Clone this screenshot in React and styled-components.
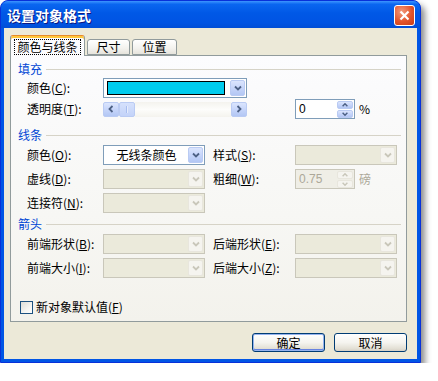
import styled, { createGlobalStyle } from "styled-components";

const GlobalStyle = createGlobalStyle`
  html, body {
    margin: 0;
    background: #fff;
  }
  body {
    font-family: "Noto Sans CJK SC", "Noto Sans", sans-serif;
    font-size: 12px;
    color: #000;
  }
`;

function Chevron({ dir = "down", color = "#4d6185" }) {
  const paths = {
    down: "M1 1.5 L4 4.5 L7 1.5",
    up: "M1 4.5 L4 1.5 L7 4.5",
    left: "M4.5 1 L1.5 4 L4.5 7",
    right: "M1.5 1 L4.5 4 L1.5 7",
  };
  const vertical = dir === "down" || dir === "up";
  return (
    <svg width={vertical ? 8 : 6} height={vertical ? 6 : 8} viewBox={vertical ? "0 0 8 6" : "0 0 6 8"}>
      <path d={paths[dir]} fill="none" stroke={color} strokeWidth="1.8" />
    </svg>
  );
}

function Combo({ disabled, width = 102, children, centered }) {
  return (
    <ComboBox $disabled={disabled} $w={width}>
      <ComboValue $centered={centered}>{children}</ComboValue>
      <DropButton $disabled={disabled}>
        <Chevron color={disabled ? "#c9c7ba" : "#4d6185"} />
      </DropButton>
    </ComboBox>
  );
}

function SpinBox({ value, disabled }) {
  return (
    <Spin $disabled={disabled}>
      <SpinText $disabled={disabled}>{value}</SpinText>
      <SpinButtons>
        <SpinHalf $disabled={disabled}>
          <Chevron dir="up" color={disabled ? "#c9c7ba" : "#4d6185"} />
        </SpinHalf>
        <SpinHalf $disabled={disabled}>
          <Chevron dir="down" color={disabled ? "#c9c7ba" : "#4d6185"} />
        </SpinHalf>
      </SpinButtons>
    </Spin>
  );
}

function Section({ title, top }) {
  return (
    <SectionHead $top={top}>
      <HeadText>{title}</HeadText>
      <HeadLine />
    </SectionHead>
  );
}

export default function App() {
  return (
    <>
      <GlobalStyle />
      <Window>
        <TitleBar>
          <Title>设置对象格式</Title>
          <CloseButton>
            <svg width="11" height="11" viewBox="0 0 11 11">
              <path d="M1.5 1.5 L9.5 9.5 M9.5 1.5 L1.5 9.5" stroke="#fff" strokeWidth="2.2" />
            </svg>
          </CloseButton>
        </TitleBar>
        <Body>
          <TabStrip>
            <Tab $active $w={75}>
              <FocusText>颜色与线条</FocusText>
            </Tab>
            <Tab $w={43}>尺寸</Tab>
            <Tab $w={45}>位置</Tab>
          </TabStrip>
          <Panel>
            <Section title="填充" top={0} />
            <FieldGrid $rowH={20} $gap={1}>
              <Label $col={1}>颜色(<u>C</u>):</Label>
              <Wide>
                <ComboBox $w={144}>
                  <Swatch />
                  <DropButton>
                    <Chevron />
                  </DropButton>
                </ComboBox>
              </Wide>
              <Label $col={1}>透明度(<u>T</u>):</Label>
              <Wide>
                <Slider>
                  <ArrowButton>
                    <Chevron dir="left" />
                  </ArrowButton>
                  <Thumb />
                  <Track />
                  <ArrowButton>
                    <Chevron dir="right" />
                  </ArrowButton>
                </Slider>
              </Wide>
              <SpinCell>
                <SpinBox value="0" />
                <Unit>%</Unit>
              </SpinCell>
            </FieldGrid>

            <Section title="线条" top={9} />
            <FieldGrid $rowH={21} $gap={3}>
              <Label>颜色(<u>O</u>):</Label>
              <Combo centered>无线条颜色</Combo>
              <Label>样式(<u>S</u>):</Label>
              <Combo disabled />
              <Label>虚线(<u>D</u>):</Label>
              <Combo disabled />
              <Label>粗细(<u>W</u>):</Label>
              <SpinCell>
                <SpinBox value="0.75" disabled />
                <Unit $disabled>磅</Unit>
              </SpinCell>
              <Label>连接符(<u>N</u>):</Label>
              <Combo disabled />
            </FieldGrid>

            <Section title="箭头" top={4} />
            <FieldGrid $rowH={21} $gap={3}>
              <Label>前端形状(<u>B</u>):</Label>
              <Combo disabled />
              <Label>后端形状(<u>E</u>):</Label>
              <Combo disabled />
              <Label>前端大小(<u>I</u>):</Label>
              <Combo disabled />
              <Label>后端大小(<u>Z</u>):</Label>
              <Combo disabled />
            </FieldGrid>

            <CheckRow>
              <CheckBox />
              <span>新对象默认值(<u>F</u>)</span>
            </CheckRow>
          </Panel>
          <Footer>
            <Button $default>确定</Button>
            <Button>取消</Button>
          </Footer>
        </Body>
      </Window>
    </>
  );
}

const Window = styled.div`
  width: 421px;
  height: 363px;
  box-sizing: border-box;
  display: flex;
  flex-direction: column;
  border: 1px solid #0831d9;
  border-radius: 8px 8px 0 0;
  background: #0055e5;
  box-shadow: 4px 5px 6px rgba(0, 0, 0, 0.45);
  overflow: hidden;
`;

const TitleBar = styled.div`
  height: 27px;
  flex: none;
  display: flex;
  align-items: center;
  justify-content: space-between;
  padding: 0 5px 0 6px;
  background: linear-gradient(
    180deg,
    #3d95ff 0%,
    #0a66f0 12%,
    #0058e6 45%,
    #0054e3 80%,
    #004ed6 100%
  );
`;

const Title = styled.div`
  color: #fff;
  font-size: 14px;
  font-weight: bold;
  line-height: 1;
  text-shadow: 1px 1px 0 #0a1883;
`;

const CloseButton = styled.div`
  width: 19px;
  height: 19px;
  margin-top: 1px;
  display: flex;
  align-items: center;
  justify-content: center;
  border: 1px solid #fff;
  border-radius: 3px;
  background: radial-gradient(circle at 35% 30%, #f39a7c 0%, #e2542c 55%, #c53c16 100%);
`;

const Body = styled.div`
  flex: 1;
  margin: 0 3px 3px 3px;
  background: #ece9d8;
  padding: 7px 10px 0 6px;
  display: flex;
  flex-direction: column;
`;

const TabStrip = styled.div`
  height: 20px;
  display: flex;
  align-items: flex-end;
  gap: 2px;
  position: relative;
  z-index: 1;
`;

const Tab = styled.div`
  box-sizing: border-box;
  width: ${(p) => p.$w}px;
  height: ${(p) => (p.$active ? 21 : 16)}px;
  margin-bottom: ${(p) => (p.$active ? -1 : 0)}px;
  display: flex;
  align-items: center;
  justify-content: center;
  border: 1px solid #919b9c;
  border-bottom: ${(p) => (p.$active ? "none" : "1px solid #919b9c")};
  border-top-color: ${(p) => (p.$active ? "#e68b2c" : "#919b9c")};
  border-radius: 3px 3px 0 0;
  background: ${(p) =>
    p.$active ? "#fcfcfe" : "linear-gradient(180deg, #ffffff 0%, #f3f2ee 60%, #e6e4dc 100%)"};
  box-shadow: ${(p) => (p.$active ? "inset 0 2px 0 #ffc83c" : "none")};
  line-height: 1;
  padding-top: ${(p) => (p.$active ? 2 : 0)}px;
`;

const FocusText = styled.span`
  outline: 1px dotted #000;
  outline-offset: 1px;
  padding: 0 1px;
`;

const Panel = styled.div`
  height: 267px;
  box-sizing: border-box;
  border: 1px solid #919b9c;
  background: linear-gradient(180deg, #fcfcfe 0%, #f7f7f4 60%, #f3f2ec 100%);
  padding: 6px 5px 0 7px;
  display: flex;
  flex-direction: column;
`;

const SectionHead = styled.div`
  height: 14px;
  margin-top: ${(p) => p.$top}px;
  display: flex;
  align-items: center;
  gap: 4px;
`;

const HeadText = styled.span`
  color: #0046d5;
  line-height: 1;
`;

const HeadLine = styled.div`
  flex: 1;
  height: 1px;
  background: #d6d3c7;
`;

const FieldGrid = styled.div`
  margin: 2px 0 0 9px;
  display: grid;
  grid-template-columns: 76px 110px 82px 102px;
  grid-auto-rows: ${(p) => p.$rowH}px;
  row-gap: ${(p) => p.$gap}px;
  align-items: center;
`;

const Label = styled.div`
  line-height: 1;
  white-space: nowrap;
  grid-column-start: ${(p) => p.$col || "auto"};
`;

const Wide = styled.div`
  grid-column: 2 / span 2;
  display: flex;
  align-items: center;
`;

const ComboBox = styled.div`
  box-sizing: border-box;
  width: ${(p) => p.$w}px;
  height: 20px;
  display: flex;
  align-items: stretch;
  padding: 1px;
  border: 1px solid ${(p) => (p.$disabled ? "#c9c7ba" : "#7f9db9")};
  background: ${(p) => (p.$disabled ? "#ebeadb" : "#fff")};
`;

const ComboValue = styled.div`
  flex: 1;
  display: flex;
  align-items: center;
  justify-content: ${(p) => (p.$centered ? "center" : "flex-start")};
  line-height: 1;
`;

const Swatch = styled.div`
  flex: 1;
  margin: 1px 5px 1px 2px;
  border: 1px solid #000;
  background: #00ccee;
`;

const DropButton = styled.div`
  box-sizing: border-box;
  width: 15px;
  display: flex;
  align-items: center;
  justify-content: center;
  border: 1px solid ${(p) => (p.$disabled ? "#e8e6dd" : "#bacbf3")};
  border-radius: 2px;
  background: ${(p) =>
    p.$disabled
      ? "#f5f4ef"
      : "linear-gradient(180deg, #dbe5fd 0%, #c6d5fa 50%, #b3c7f4 100%)"};
`;

const Slider = styled.div`
  box-sizing: border-box;
  width: 144px;
  height: 15px;
  display: flex;
  background: #fbfbf8;
`;

const ArrowButton = styled.div`
  box-sizing: border-box;
  width: 16px;
  display: flex;
  align-items: center;
  justify-content: center;
  border: 1px solid #bacbf3;
  border-radius: 2px;
  background: linear-gradient(180deg, #dbe5fd 0%, #c6d5fa 50%, #b3c7f4 100%);
`;

const Thumb = styled(ArrowButton)`
  width: 16px;
  background: repeating-linear-gradient(
      90deg,
      transparent 0 5px,
      #a8bdef 5px 6px,
      #e6edfd 6px 7px
    ),
    linear-gradient(180deg, #d6e1fc 0%, #c3d3f9 100%);
  background-size: 12px 7px, auto;
  background-position: center, center;
  background-repeat: no-repeat;
`;

const Track = styled.div`
  flex: 1;
  background: linear-gradient(180deg, #f4f3ee 0%, #fdfdfb 50%, #f4f3ee 100%);
`;

const SpinCell = styled.div`
  display: flex;
  align-items: center;
  gap: 4px;
`;

const Spin = styled.div`
  box-sizing: border-box;
  width: 60px;
  height: 20px;
  display: flex;
  padding: 1px;
  border: 1px solid ${(p) => (p.$disabled ? "#c9c7ba" : "#7f9db9")};
  background: ${(p) => (p.$disabled ? "#efeee6" : "#fff")};
`;

const SpinText = styled.div`
  flex: 1;
  display: flex;
  align-items: center;
  padding-left: 2px;
  font-family: "Liberation Sans", Arial, sans-serif;
  color: ${(p) => (p.$disabled ? "#aca899" : "#000")};
`;

const SpinButtons = styled.div`
  width: 16px;
  display: flex;
  flex-direction: column;
  gap: 1px;
`;

const SpinHalf = styled(DropButton)`
  width: 16px;
  flex: 1;

  svg {
    transform: scale(0.8);
  }
`;

const Unit = styled.span`
  line-height: 1;
  color: ${(p) => (p.$disabled ? "#aca899" : "#000")};
`;

const CheckRow = styled.div`
  margin: 22px 0 0 2px;
  height: 14px;
  display: flex;
  align-items: center;
  gap: 3px;
  line-height: 1;
`;

const CheckBox = styled.div`
  box-sizing: border-box;
  width: 13px;
  height: 13px;
  border: 1px solid #1c5180;
  background: linear-gradient(135deg, #dcdcd7 0%, #f4f4f1 60%, #ffffff 100%);
`;

const Footer = styled.div`
  margin-top: 11px;
  display: flex;
  justify-content: flex-end;
  gap: 9px;
`;

const Button = styled.div`
  box-sizing: border-box;
  width: 73px;
  height: 19px;
  display: flex;
  align-items: center;
  justify-content: center;
  border: 1px solid #003c74;
  border-radius: 3px;
  background: linear-gradient(180deg, #ffffff 0%, #f5f4ef 50%, #e3e0d5 85%, #d6d0c5 100%);
  box-shadow: ${(p) =>
    p.$default ? "inset 0 0 0 1px #95b3ee, inset 0 -1px 0 1px #6883e0" : "none"};
  line-height: 1;
`;
